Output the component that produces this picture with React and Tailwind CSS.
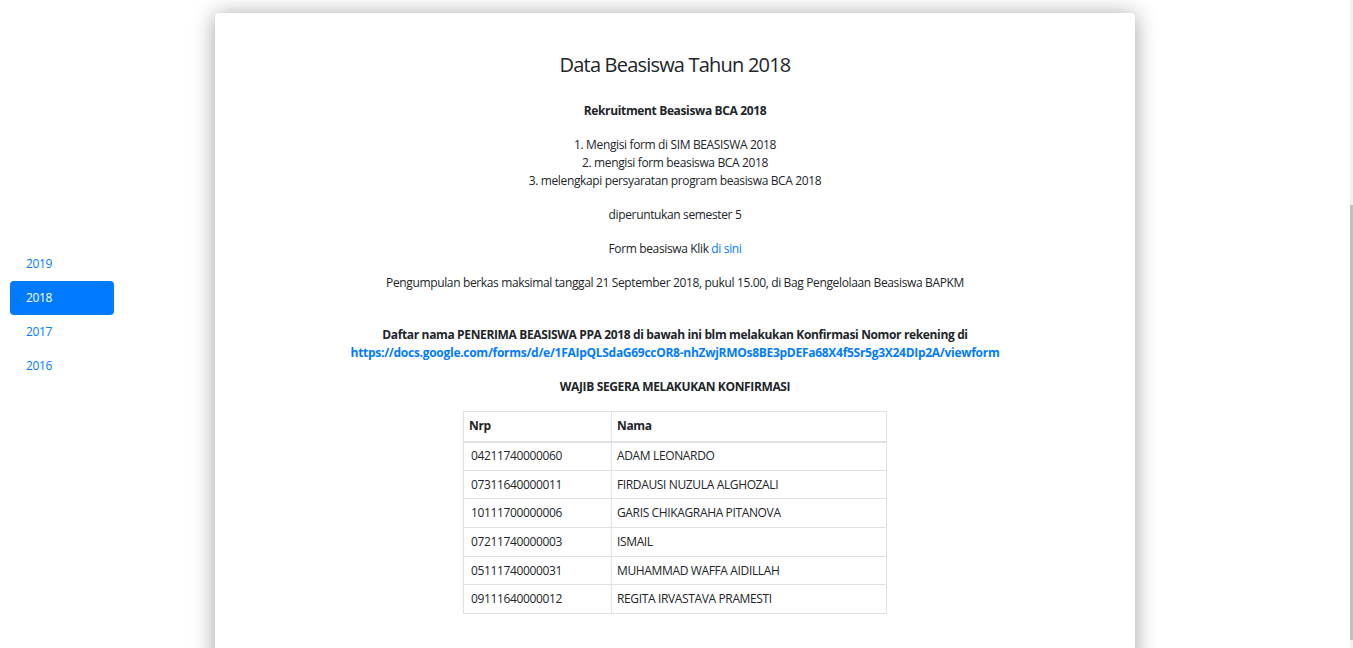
const years = ["2019", "2018", "2017", "2016"];

const penerima = [
  { nrp: "04211740000060", nama: "ADAM LEONARDO" },
  { nrp: "07311640000011", nama: "FIRDAUSI NUZULA ALGHOZALI" },
  { nrp: "10111700000006", nama: "GARIS CHIKAGRAHA PITANOVA" },
  { nrp: "07211740000003", nama: "ISMAIL" },
  { nrp: "05111740000031", nama: "MUHAMMAD WAFFA AIDILLAH" },
  { nrp: "09111640000012", nama: "REGITA IRVASTAVA PRAMESTI" },
];

const App = () => {
  return (
    <div
      className="flex h-[648px] w-full overflow-hidden bg-white text-[12px] leading-[18px] tracking-[-0.36px] text-[#212529]"
      style={{ fontFamily: '"Open Sans", "Noto Sans", sans-serif' }}
    >
      <div className="flex flex-1">
        <div className="w-[215px] shrink-0 pl-[10px] pt-[247px]">
          <ul className="w-[104px]">
            {years.map((year) => (
              <li key={year}>
                <a
                  href="#"
                  className={`block h-[34px] rounded-[4px] px-4 leading-[34px] ${
                    year === "2018"
                      ? "bg-[#007bff] text-white"
                      : "text-[#007bff]"
                  }`}
                >
                  {year}
                </a>
              </li>
            ))}
          </ul>
        </div>

        <div className="mt-[13px] h-[700px] w-[920px] shrink-0 rounded-[4px] bg-white pt-[40px] text-center shadow-[0_2px_22px_rgba(0,0,0,0.38)]">
          <h3 className="text-[20px] leading-[24px] font-normal tracking-[-0.8px]">
            Data Beasiswa Tahun 2018
          </h3>
          <p className="mt-[25px] font-bold">Rekruitment Beasiswa BCA 2018</p>
          <p className="mt-4">
            1. Mengisi form di SIM BEASISWA 2018
            <br />
            2. mengisi form beasiswa BCA 2018
            <br />
            3. melengkapi persyaratan program beasiswa BCA 2018
          </p>
          <p className="mt-4">diperuntukan semester 5</p>
          <p className="mt-4">
            Form beasiswa Klik{" "}
            <a href="#" className="text-[#007bff]">
              di sini
            </a>
          </p>
          <p className="mt-4">
            Pengumpulan berkas maksimal tanggal 21 September 2018, pukul 15.00,
            di Bag Pengelolaan Beasiswa BAPKM
            <br />
            &nbsp;
          </p>
          <p className="mt-4 font-bold">
            Daftar nama PENERIMA BEASISWA PPA 2018 di bawah ini blm melakukan
            Konfirmasi Nomor rekening di
            <br />
            <a href="#" className="text-[#007bff] tracking-[-0.28px]">
              https://docs.google.com/forms/d/e/1FAIpQLSdaG69ccOR8-nhZwjRMOs8BE3pDEFa68X4f5Sr5g3X24DIp2A/viewform
            </a>
          </p>
          <p className="mt-4 font-bold">WAJIB SEGERA MELAKUKAN KONFIRMASI</p>

          <table className="mx-auto mt-[15px] w-[424px] border-collapse text-left">
            <thead>
              <tr>
                <th className="h-[30px] w-[148px] border border-b-2 border-[#dee2e6] px-[5px] font-bold">
                  Nrp
                </th>
                <th className="h-[30px] border border-b-2 border-[#dee2e6] px-[5px] font-bold">
                  Nama
                </th>
              </tr>
            </thead>
            <tbody>
              {penerima.map((row) => (
                <tr key={row.nrp}>
                  <td className="h-[28.7px] border border-[#dee2e6] px-[7px]">
                    {row.nrp}
                  </td>
                  <td className="h-[28.7px] border border-[#dee2e6] px-[5px]">
                    {row.nama}
                  </td>
                </tr>
              ))}
            </tbody>
          </table>
        </div>

        <div className="w-[215px] shrink-0" />
      </div>

      <div className="flex w-[3px] shrink-0 flex-col bg-[#f1f1f1]">
        <div className="h-[205px]" />
        <div className="h-[435px] bg-[#c1c1c1]" />
      </div>
    </div>
  );
};

export default App;
